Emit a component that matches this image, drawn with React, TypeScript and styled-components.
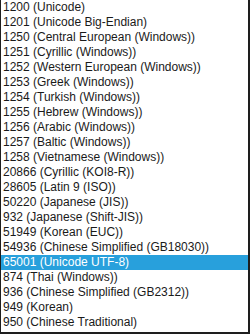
import React from "react";
import styled, { createGlobalStyle } from "styled-components";

const encodings = [
    "1200 (Unicode)",
    "1201 (Unicode Big-Endian)",
    "1250 (Central European (Windows))",
    "1251 (Cyrillic (Windows))",
    "1252 (Western European (Windows))",
    "1253 (Greek (Windows))",
    "1254 (Turkish (Windows))",
    "1255 (Hebrew (Windows))",
    "1256 (Arabic (Windows))",
    "1257 (Baltic (Windows))",
    "1258 (Vietnamese (Windows))",
    "20866 (Cyrillic (KOI8-R))",
    "28605 (Latin 9 (ISO))",
    "50220 (Japanese (JIS))",
    "932 (Japanese (Shift-JIS))",
    "51949 (Korean (EUC))",
    "54936 (Chinese Simplified (GB18030))",
    "65001 (Unicode UTF-8)",
    "874 (Thai (Windows))",
    "936 (Chinese Simplified (GB2312))",
    "949 (Korean)",
    "950 (Chinese Traditional)",
];

const GlobalStyle = createGlobalStyle`
    html, body {
        margin: 0;
        padding: 0;
        background: #ffffff;
    }
`;

const SDropList = styled.ul`
    box-sizing: border-box;
    width: 250px;
    height: 334px;
    margin: 0;
    padding: 0 0 2px 0;
    list-style: none;
    background: #ffffff;
    border-left: 1px solid #1e1e1e;
    border-right: 2px solid #1e1e1e;
    border-bottom: 2px solid #1e1e1e;
    font-family: "Liberation Sans", Arial, sans-serif;
    font-size: 12px;
    overflow: hidden;
`;

const SOption = styled.li<{ $selected?: boolean }>`
    height: 15px;
    line-height: 15px;
    padding-left: 2px;
    white-space: nowrap;
    color: ${(p) => (p.$selected ? "#ffffff" : "#1a1a1a")};
    background: ${(p) => (p.$selected ? "#28a0dc" : "transparent")};
`;

export default function App() {
    const selected = "65001 (Unicode UTF-8)";
    return (
        <>
            <GlobalStyle />
            <SDropList role="listbox">
                {encodings.map((name) => (
                    <SOption key={name} role="option" $selected={name === selected}>
                        {name}
                    </SOption>
                ))}
            </SDropList>
        </>
    );
}
